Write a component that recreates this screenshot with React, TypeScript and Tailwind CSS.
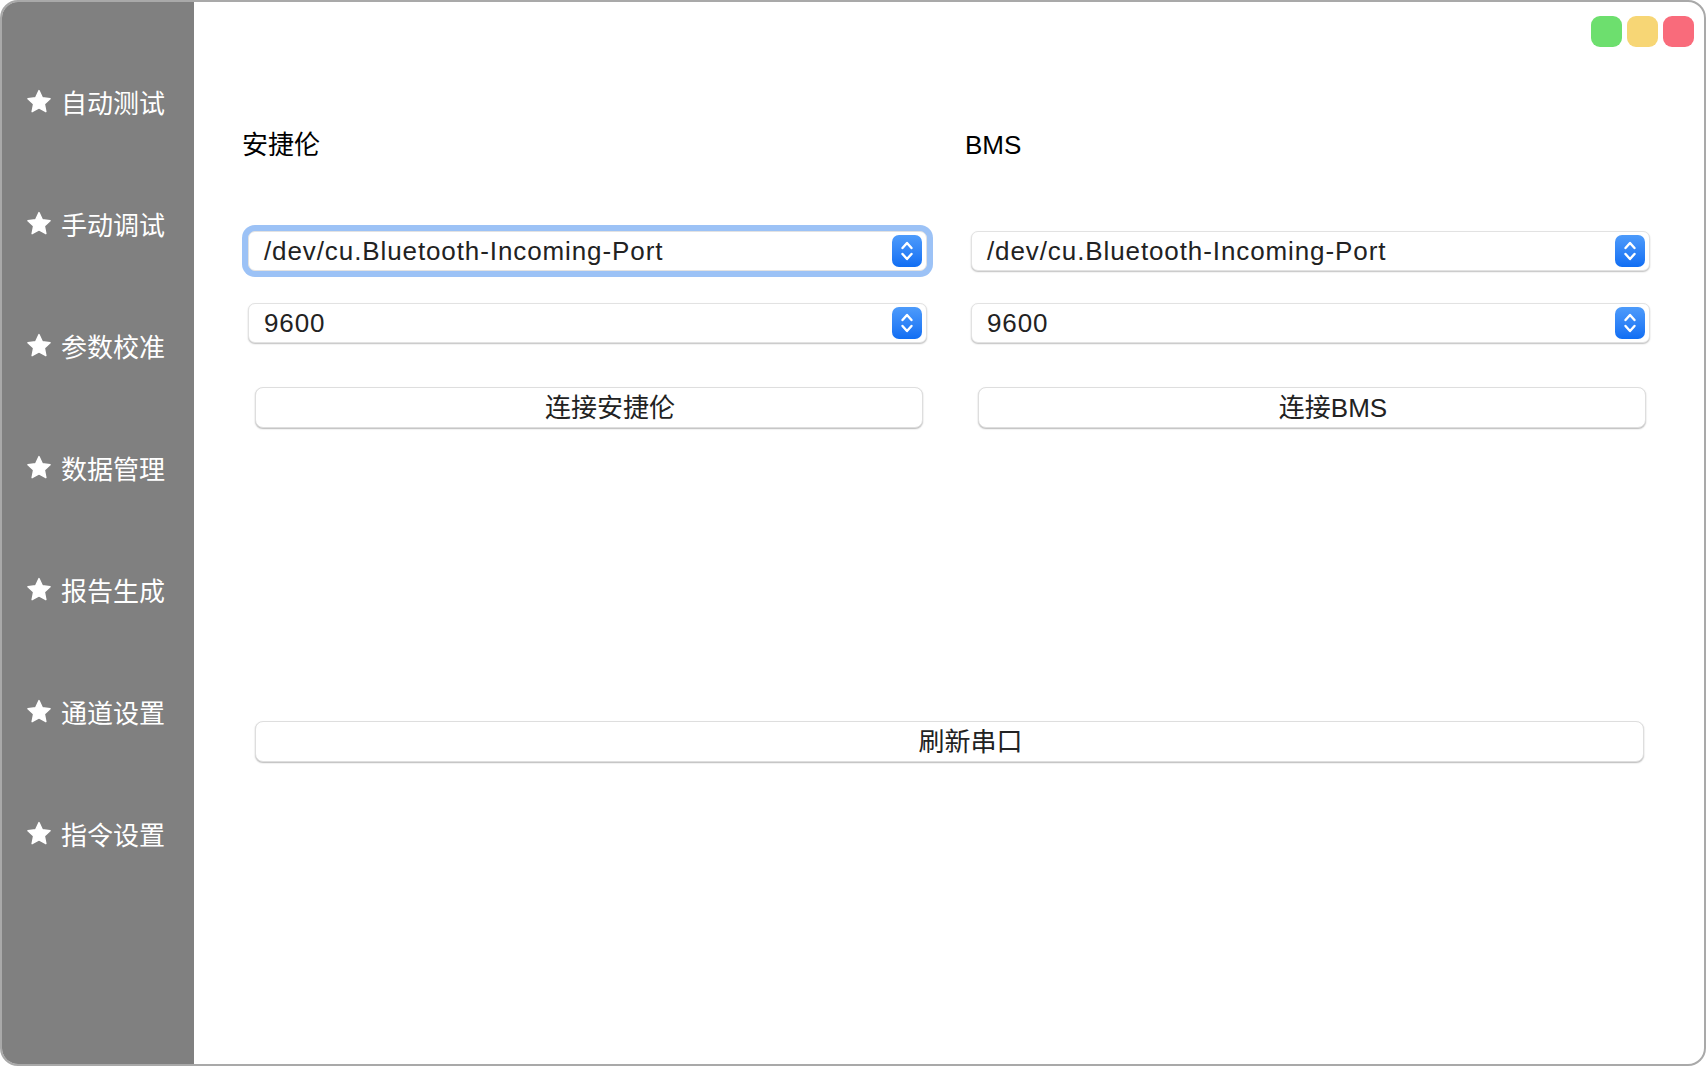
import React from "react";

const menu = ["自动测试", "手动调试", "参数校准", "数据管理", "报告生成", "通道设置", "指令设置"];

const font = "font-['Liberation_Sans','Noto_Sans_CJK_SC',sans-serif]";

function StarIcon() {
    return (
        <svg width="28" height="28" viewBox="0 0 24 24" fill="white" stroke="white" strokeWidth={1.2} strokeLinejoin="round">
            <path d="M12 2.2l2.9 6.1 6.6.8-4.9 4.6 1.3 6.6L12 17.1l-5.9 3.2 1.3-6.6-4.9-4.6 6.6-.8z" />
        </svg>
    );
}

function Stepper() {
    return (
        <div className="w-[30px] h-[32px] rounded-[7px] bg-gradient-to-b from-[#4d9bfb] to-[#0f6ef3] flex items-center justify-center">
            <svg width="16" height="26" viewBox="0 0 16 26" fill="none" stroke="white" strokeWidth={2.4} strokeLinecap="round" strokeLinejoin="round">
                <path d="M3.5 10l4.5-5 4.5 5" />
                <path d="M3.5 16l4.5 5 4.5-5" />
            </svg>
        </div>
    );
}

function Combo({ value, focused }: { value: string; focused?: boolean }) {
    return (
        <div
            className={
                "mx-[7px] h-[40px] bg-white rounded-[7px] border border-[#e2e2e2] shadow-[0_1px_1.5px_rgba(0,0,0,0.25)] flex items-center justify-between pl-[15px] pr-[4px] " +
                (focused ? "ring-[6px] ring-[#9cc2f6]" : "")
            }
        >
            <span className="text-[26px] leading-none tracking-[0.9px] text-[#222]">{value}</span>
            <Stepper />
        </div>
    );
}

function Button({ label, className }: { label: string; className?: string }) {
    return (
        <button
            className={
                "h-[41px] bg-white rounded-[8px] border border-[#dedede] shadow-[0_1px_1.5px_rgba(0,0,0,0.28)] text-[26px] leading-none text-[#222] flex items-center justify-center pl-[42px] " +
                (className ?? "")
            }
        >
            {label}
        </button>
    );
}

function Column({ title, button, focused }: { title: string; button: string; focused?: boolean }) {
    return (
        <div className="flex flex-col">
            <div className="text-[26px] leading-none text-black h-[26px] pl-[1px]">{title}</div>
            <div className="mt-[73px]">
                <Combo value="/dev/cu.Bluetooth-Incoming-Port" focused={focused} />
            </div>
            <div className="mt-[32px]">
                <Combo value="9600" />
            </div>
            <Button label={button} className="mt-[44px] ml-[14px] mr-[11px]" />
        </div>
    );
}

export default function App() {
    return (
        <div className={"w-[1706px] h-[1066px] bg-white " + font}>
            <div className="w-full h-full rounded-[18px] border-2 border-[#a9a9a9] overflow-hidden flex">
                <div className="w-[192px] bg-[#808080] flex flex-col pt-[39px] pl-[23px]">
                    {menu.map((m) => (
                        <div key={m} className="h-[122px] flex items-center gap-[8px]">
                            <StarIcon />
                            <span className="text-[26px] leading-none text-white font-['Noto_Sans_CJK_SC',sans-serif]">{m}</span>
                        </div>
                    ))}
                </div>
                <div className="flex-1 flex flex-col">
                    <div className="flex justify-end gap-[5px] pt-[14px] pr-[10px]">
                        <div className="w-[31px] h-[31px] rounded-[9px] bg-[#6ddf6e]" />
                        <div className="w-[31px] h-[31px] rounded-[9px] bg-[#f7d675]" />
                        <div className="w-[31px] h-[31px] rounded-[9px] bg-[#f96b7b]" />
                    </div>
                    <div className="pl-[47px] pr-[47px] mt-[85px]">
                        <div className="grid grid-cols-2 gap-[30px]">
                            <Column title="安捷伦" button="连接安捷伦" focused />
                            <Column title="BMS" button="连接BMS" />
                        </div>
                        <Button label="刷新串口" className="w-[1389px] mt-[293px] ml-[14px]" />
                    </div>
                </div>
            </div>
        </div>
    );
}
